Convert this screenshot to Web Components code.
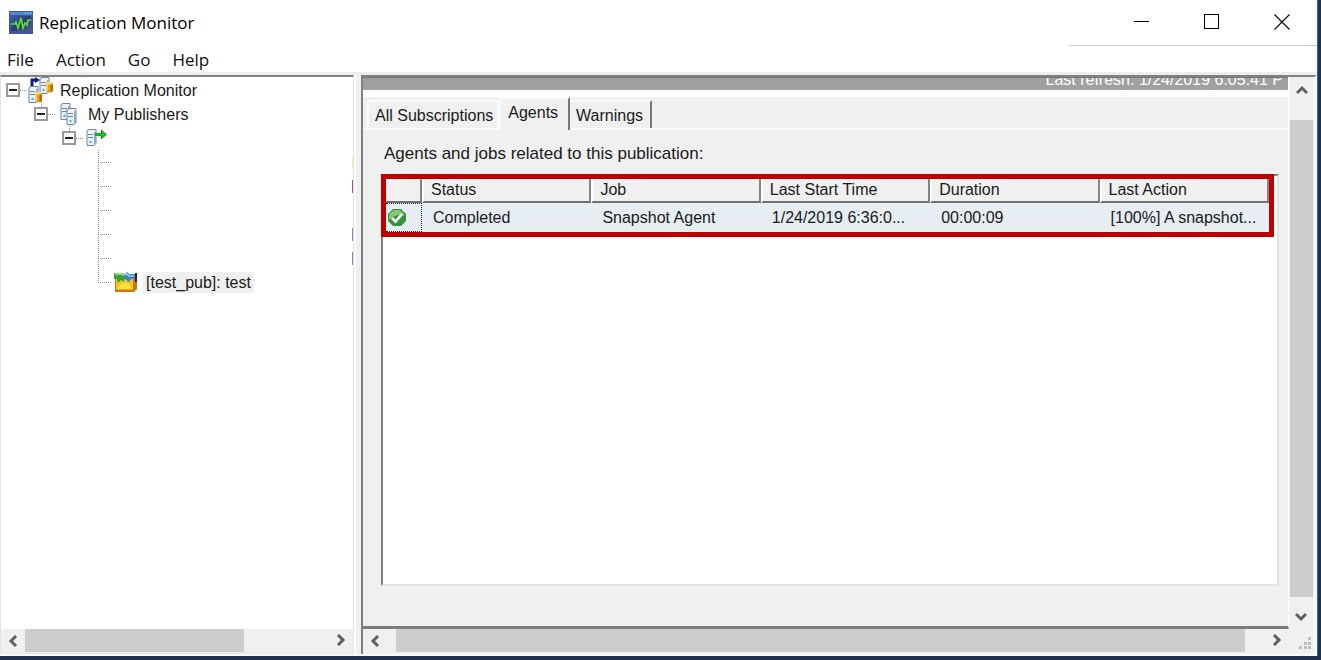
<!DOCTYPE html>
<html lang="en">
<head>
<meta charset="utf-8">
<title>Replication Monitor</title>
<style>
  html, body { height: 100%; }
  body { margin: 0; background: #22304e; font: 16px/20px "Liberation Sans", Arial, sans-serif; color: #1a1a1a; overflow: hidden; }
</style>
</head>
<body>
<app-window>
  <title-bar slot="title">Replication Monitor</title-bar>
  <menu-bar slot="menu"></menu-bar>
  <publisher-tree slot="tree"></publisher-tree>
  <detail-pane slot="detail"></detail-pane>
</app-window>

<script>
const define = (name, html) => customElements.define(name, class extends HTMLElement {
  constructor() {
    super();
    this.attachShadow({ mode: 'open' }).innerHTML =
      '<style>*{box-sizing:border-box}button{font:inherit;color:inherit;background:none;border:0;padding:0;margin:0}svg{display:block}</style>' + html;
  }
});

define('app-window', `
<style>
  :host { display: flex; height: 100vh; box-sizing: border-box; padding: 0 3px 4px 0; }
  .frame { flex: 1; min-width: 0; display: flex; flex-direction: column; background: #fff; border-right: 1px solid #1a73b8; }
  main { flex: 1; min-height: 0; display: flex; padding-bottom: 2px; border-top: 3px solid #eee; background: #fafafa; }
  .left { flex: 0 0 354px; min-width: 0; display: flex; }
  .split { flex: 0 0 7px; border-left: 2px solid #fff; background: #f0f0f0; }
  .right { flex: 1; min-width: 0; display: flex; }
</style>
<div class="frame">
  <slot name="title"></slot>
  <slot name="menu"></slot>
  <main>
    <div class="left"><slot name="tree"></slot></div>
    <div class="split"></div>
    <div class="right"><slot name="detail"></slot></div>
  </main>
</div>`);

define('title-bar', `
<style>
  :host { display: flex; height: 46px; font: 17px/24px "Open Sans", "Noto Sans", sans-serif; color: #000; }
  .name { flex: 1; display: flex; align-items: center; gap: 6px; padding: 0 0 2px 9px; }
  h1 { font: inherit; margin: 0; padding-top: 2px; }
  .controls { display: flex; width: 248px; padding-left: 38px; border-bottom: 1px solid #ccc; }
  button { width: 70px; display: grid; place-items: center; padding-bottom: 2px; }
</style>
<div class="name">
  <svg width="24" height="23" viewBox="0 0 24 23">
    <defs><linearGradient id="g" x2="1" y2="1"><stop offset="0" stop-color="#3c5fa8"/><stop offset=".5" stop-color="#2c3c70"/><stop offset="1" stop-color="#555c90"/></linearGradient></defs>
    <rect width="24" height="23" fill="#47559a"/><rect x="1" y="1" width="22" height="3" fill="#4f86d8"/>
    <path d="M16 2h1M19 2h1M21 2h1" stroke="#cfe2ff" stroke-width="1"/>
    <rect x="2" y="5" width="20" height="15" fill="url(#g)"/>
    <path d="M2 13h4l1-2 2 6 3-10 2 10 2-5 2 2 1-5h3" fill="none" stroke="#52e032" stroke-width="1.7"/>
  </svg>
  <h1><slot></slot></h1>
</div>
<div class="controls">
  <button aria-label="Minimize"><svg width="16" height="16"><path d="M0 7.500h15" stroke="#000"/></svg></button>
  <button aria-label="Maximize"><svg width="16" height="16"><rect x=".5" y=".5" width="14" height="14" fill="none" stroke="#000"/></svg></button>
  <button aria-label="Close"><svg width="16" height="16"><path d="M.5 .5l15 15M15.500 .5l-15 15" stroke="#000" stroke-width="1.1"/></svg></button>
</div>`);

define('menu-bar', `
<style>
  :host { display: block; height: 26px; font: 17px/24px "Open Sans", "Noto Sans", sans-serif; color: #111; }
  nav { display: flex; gap: 22px; padding: 2px 7px 0; }
</style>
<nav aria-label="Menu"><button>File</button><button>Action</button><button>Go</button><button>Help</button></nav>`);

define('scroll-bar', `
<style>
  :host { display: flex; background: #f0f0f0; height: 24px; padding-bottom: 1px; box-sizing: border-box; }
  button { flex: 0 0 24px; display: grid; place-items: center; }
  .track { flex: 1; display: flex; margin: var(--ends, 0); }
  .thumb { background: #cdcdcd; width: var(--thumb, 70%); height: 100%; }
  path { fill: none; stroke: #606060; stroke-width: 3; }
  .inc { transform: rotate(180deg); }
  :host([vertical]) { flex-direction: column; width: 24px; height: auto; padding: 1px 1px 0 0; }
  :host([vertical]) .track { flex-direction: column; }
  :host([vertical]) .thumb { width: 100%; height: var(--thumb, 100%); }
  :host([vertical]) svg { transform: rotate(90deg); }
</style>
<button class="dec" aria-label="Scroll back"><svg width="10" height="12"><path d="M8 1L3 6l5 5"/></svg></button>
<div class="track"><div class="thumb"></div></div>
<button class="inc" aria-label="Scroll forward"><svg width="10" height="12"><path d="M8 1L3 6l5 5"/></svg></button>`);

define('tree-row', `
<style>
  :host { display: flex; align-items: center; height: 24px; padding-left: calc(var(--depth, 0) * 28px + 5px); box-sizing: border-box; }
  button { flex: 0 0 14px; height: 14px; border: 2px solid #9a9a9a; background: #fff; display: grid; place-items: center; }
  button::before { content: ""; width: 8px; height: 2px; background: #222; }
  .dots { flex: 0 0 8px; margin-right: 1px; height: 1px; background: repeating-linear-gradient(90deg, #888 0 1px, #fff 1px 2px); }
  .label { padding: 0 3px; line-height: 21px; margin-left: 4px; }
  :host([leaf]) button { display: none; }
  :host([leaf]) .dots { flex-basis: 14px; }
  :host([selected]) .label { background: #f0f0f0; }
  :host([bare]) .label { display: none; }
  ::slotted([slot=edge]) { margin-left: auto; width: 1px; height: 13px; }
</style>
<button aria-label="Collapse"></button><span class="dots"></span>
<slot name="icon"></slot><span class="label"><slot></slot></span><slot name="edge"></slot>`);

const server = (x, y) => `<g transform="translate(${x} ${y})">
  <path d="M1 1.500L3 .5h7v14l-2 2H1z" fill="#e9f2fa" stroke="#71869b"/>
  <path d="M8 3h2v11l-2 2z" fill="#91aac4"/>
  <path d="M2 5.500h5M2 8.500h5" stroke="#71869b"/><path d="M2 3.500h5" stroke="#fff"/>
  <circle cx="4.500" cy="13" r="1.200" fill="#45b5cf"/></g>`;
const drum = (x, y) => `<g transform="translate(${x} ${y})">
  <path d="M0 2v8q3.500 3 7 0V2z" fill="#e3a01c"/><path d="M4.500 2H7v8q-1 1-2.500 1z" fill="#b56a0c"/>
  <path d="M1 3v7" stroke="#ffe07a" stroke-width="1.400"/><ellipse cx="3.500" cy="2" rx="3.500" ry="1.500" fill="#ffd768"/></g>`;

define('publisher-tree', `
<style>
  :host { flex: 1; min-width: 0; display: flex; flex-direction: column; border: 1px solid #e3e3e3; border-top: 2px solid #828282; background: #fff; }
  .tree { flex: 1; min-height: 0; overflow: hidden; padding-top: 1px; }
  .d1 { --depth: 1; } .d2 { --depth: 2; }
  .children { background: repeating-linear-gradient(#888 0 1px, #fff 1px 2px) 97px 0 / 1px calc(100% - 12px) no-repeat; }
  .children tree-row { padding-left: 97px; }
  svg { overflow: visible; }
  scroll-bar { --thumb: 72%; }
</style>
<div class="tree" role="tree">
  <tree-row role="treeitem"><svg slot="icon" width="24" height="24" viewBox="0 0 24 24">
    ${server(10, -1)}${drum(17, 3)}${server(-1, 8)}${drum(6, 13)}
    <path d="M3 8V2h4" fill="none" stroke="#111c80" stroke-width="3"/><path d="M6-1l5 3-5 3z" fill="#111c80"/>
    <path d="M12.500 24v5" stroke="#888" stroke-dasharray="1 1"/></svg>Replication Monitor</tree-row>
  <tree-row class="d1" role="treeitem"><svg slot="icon" width="24" height="24" viewBox="0 0 24 24">
    ${server(3, 1)}${server(9, 6)}<path d="M12.500 24v6" stroke="#888" stroke-dasharray="1 1"/></svg>My Publishers</tree-row>
  <tree-row class="d2" bare role="treeitem" aria-label="Publisher"><svg slot="icon" width="24" height="24" viewBox="0 0 24 24">
    ${server(1, 3)}<path d="M10 8.500h8" stroke="#087c08" stroke-width="3"/><path d="M16 3.500l6 5-6 5z" fill="#087c08"/><path d="M10 8.500h9" stroke="#18d018" stroke-width="2"/><path d="M17 5l4 3.500-4 3.500z" fill="#18c818"/></svg></tree-row>
  <div class="children" role="group">
    <tree-row leaf bare><i slot="edge" style="background:#f5efa5"></i></tree-row>
    <tree-row leaf bare><i slot="edge" style="background:#a54ca0"></i></tree-row>
    <tree-row leaf bare></tree-row>
    <tree-row leaf bare><i slot="edge" style="background:#8583c0"></i></tree-row>
    <tree-row leaf bare><i slot="edge" style="background:#8583c0"></i></tree-row>
    <tree-row leaf selected role="treeitem" aria-selected="true"><svg slot="icon" width="26" height="22" viewBox="0 0 26 22">
      <path d="M2 5h20l2-2v15l-3 3H2z" fill="#c47a10"/><path d="M3 6h17v13H3z" fill="#f4c22a"/>
      <path d="M4 18l5-6h6l4 6z" fill="#ffe23c"/><path d="M3 19.500h18M21.500 6v13" stroke="#d96b12" stroke-width="1.500"/>
      <path d="M1 2h9l4 4-3 3v2L8 9l-3 3-1-4H1z" fill="#34a52e"/><path d="M2 3h7l2 2" fill="none" stroke="#b7ef9c" stroke-width="1.500"/>
      <path d="M10 5l4-4 2 2h6l2 1v4h-6l-2 3-5-4z" fill="#3d7fc9"/><path d="M12 4l2-1 2 2h5" fill="none" stroke="#9ccdf5" stroke-width="1.500"/>
      <path d="M22 2h2v9h-2z" fill="#16283a"/></svg>[test_pub]: test</tree-row>
  </div>
</div>
<scroll-bar></scroll-bar>`);

define('tab-strip', `
<style>
  :host { display: flex; align-items: flex-end; height: 33px; padding-left: 4px; border-bottom: 2px solid #fafafa; }
  button { height: 28px; padding: 2px 4px 0 6px; border: solid #fafafa; border-width: 2px 2px 0; }
  .active { height: 33px; margin-bottom: -2px; padding: 0 10px 4px 7px; border-right-color: #777; background: #f0f0f0; }
  .last { border-right-color: #777; padding: 2px 7px 0 6px; border-left: 0; }
</style>
<button role="tab">All Subscriptions</button><button role="tab" class="active" aria-selected="true">Agents</button><button role="tab" class="last">Warnings</button>`);

define('agents-table', `
<style>
  :host { display: block; border: 2px solid #808080; border-right-color: #e3e3e3; border-bottom-color: #e3e3e3; background: #fff; }
  /* red callout frame over the first rows of the list */
  .callout { margin: -2px 3px 0 -2px; border: 5px solid #c00000; }
  table { width: 100%; table-layout: fixed; border-collapse: separate; border-spacing: 0; }
  th, td { text-align: left; font-weight: 400; white-space: nowrap; overflow: hidden; text-overflow: ellipsis; padding: 0 8px; }
  th { height: 24px; background: #f0f0f0; border-left: 2px solid #fff; border-right: 2px solid #858585; border-bottom: 2px solid #6f6f6f; padding-left: 7px; }
  td { height: 29px; background: #e6edf3; padding: 0 12px 0 11px; }
  th:first-child { border-left: 0; }
  td:first-child { padding: 0 0 0 1px; border: dotted #222; border-width: 1px 1px 1px 0; }
  .mark { width: 36px; }
</style>
<div class="callout"><table>
  <colgroup><col class="mark"><col><col><col><col><col></colgroup>
  <thead><tr><th aria-label="State"></th><th>Status</th><th>Job</th><th>Last Start Time</th><th>Duration</th><th>Last Action</th></tr></thead>
  <tbody><tr>
    <td><svg width="20" height="20" viewBox="0 0 20 20" role="img" aria-label="Success"><path d="M6 1h8l5 5v7l-5 5H6l-5-5V6z" fill="#36923b"/><path d="M7 2h6l4 4v2Q10 5 2 12V6z" fill="#82c77b"/><path d="M5 10l3.500 3.500L15 6" fill="none" stroke="#fff" stroke-width="2.600"/></svg></td>
    <td>Completed</td><td>Snapshot Agent</td><td>1/24/2019 6:36:0...</td><td>00:00:09</td><td>[100%] A snapshot...</td>
  </tr></tbody>
</table></div>`);

define('detail-pane', `
<style>
  :host { flex: 1; min-width: 0; display: grid; grid-template: minmax(0, 1fr) 25px / minmax(0, 1fr) 25px; border: 2px solid #808080; border-right: 3px solid #f8f8f8; border-bottom: 0; background: #f0f0f0; }
  .content { display: flex; flex-direction: column; min-height: 0; border-bottom: 3px solid #7c7c7c; border-right: 1px solid #fff; }
  .banner { flex: 0 0 13px; display: flex; align-items: flex-end; justify-content: flex-end; overflow: hidden; background: #a0a0a0; color: #fff; padding-right: 5px; border-top: 1px solid #777; }
  .banner span { line-height: 16px; margin-bottom: 2px; }
  .gap { flex: 0 0 7px; background: #fff; }
  .panel { flex: 1; min-height: 0; display: flex; flex-direction: column; gap: 10px; padding: 14px 9px 40px 18px; }
  .panel p { margin: 0 3px; font-size: 17px; line-height: 20px; }
  agents-table { flex: 1; min-height: 0; }
  scroll-bar { --thumb: 100%; --ends: 0 20px 0 9px; }
  scroll-bar[vertical] { margin-left: 1px; --ends: 18px 0 8px; }
  .grip { display: grid; place-items: center end; padding: 3px 2px 0 0; }
</style>
<div class="content">
  <div class="banner"><span>Last refresh: 1/24/2019 6:05:41 P</span></div>
  <div class="gap"></div>
  <tab-strip role="tablist"></tab-strip>
  <div class="panel"><p>Agents and jobs related to this publication:</p><agents-table></agents-table></div>
</div>
<scroll-bar vertical></scroll-bar>
<scroll-bar></scroll-bar>
<div class="grip"><svg width="13" height="13"><path d="M9 0h3v3H9zM5 5h3v3H5zM9 5h3v3H9zM0 9h3v3H0zM5 9h3v3H5zM9 9h3v3H9z" fill="#bdbdbd"/></svg></div>`);
</script>
</body>
</html>
